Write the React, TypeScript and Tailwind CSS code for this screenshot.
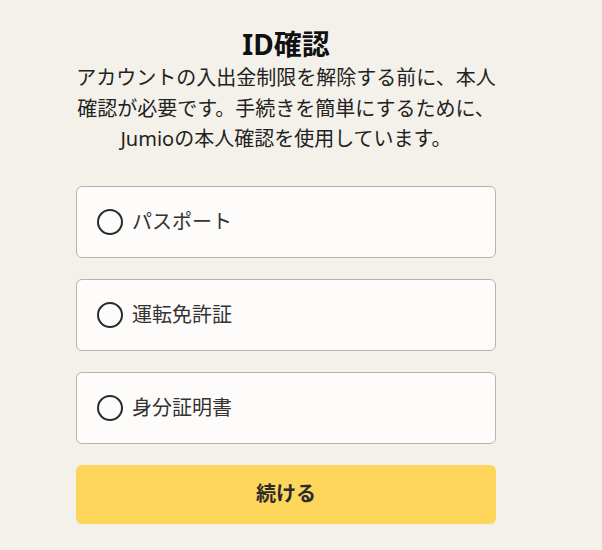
import React, { useState } from 'react';

const options = ['パスポート', '運転免許証', '身分証明書'];

export default function App() {
  const [selected, setSelected] = useState<number | null>(null);

  return (
    <div
      className="min-h-[550px] w-full bg-[#f4f1ea] text-[#222]"
      style={{ fontFamily: '"Noto Sans", "Noto Sans CJK JP", sans-serif' }}
    >
      <div className="ml-[76px] w-[420px] pt-[26px]">
        <h1 className="text-center text-[28px] font-bold leading-[36px] text-[#111]">ID確認</h1>
        <p className="mt-[1px] text-center text-[20px] leading-[30.5px] text-[#222]">
          アカウントの入出金制限を解除する前に、本人
          <br />
          確認が必要です。手続きを簡単にするために、
          <br />
          Jumioの本人確認を使用しています。
        </p>

        <div className="mt-[31px] flex flex-col gap-[21px]">
          {options.map((label, i) => (
            <button
              key={label}
              onClick={() => setSelected(i)}
              className="flex h-[72px] items-center gap-[9px] rounded-[6px] border border-[#b8b3ab] bg-[#fdfcfa] pl-[20px] text-left"
            >
              <span className="flex h-[26px] w-[26px] items-center justify-center rounded-full border-2 border-[#2a2a2a]">
                {selected === i && <span className="h-[12px] w-[12px] rounded-full bg-[#2a2a2a]" />}
              </span>
              <span className="text-[20px] leading-none text-[#333]">{label}</span>
            </button>
          ))}

          <button className="h-[59px] rounded-[6px] bg-[#fdd65b] text-[20px] font-bold text-[#2b2b2b]">
            続ける
          </button>
        </div>
      </div>
    </div>
  );
}
